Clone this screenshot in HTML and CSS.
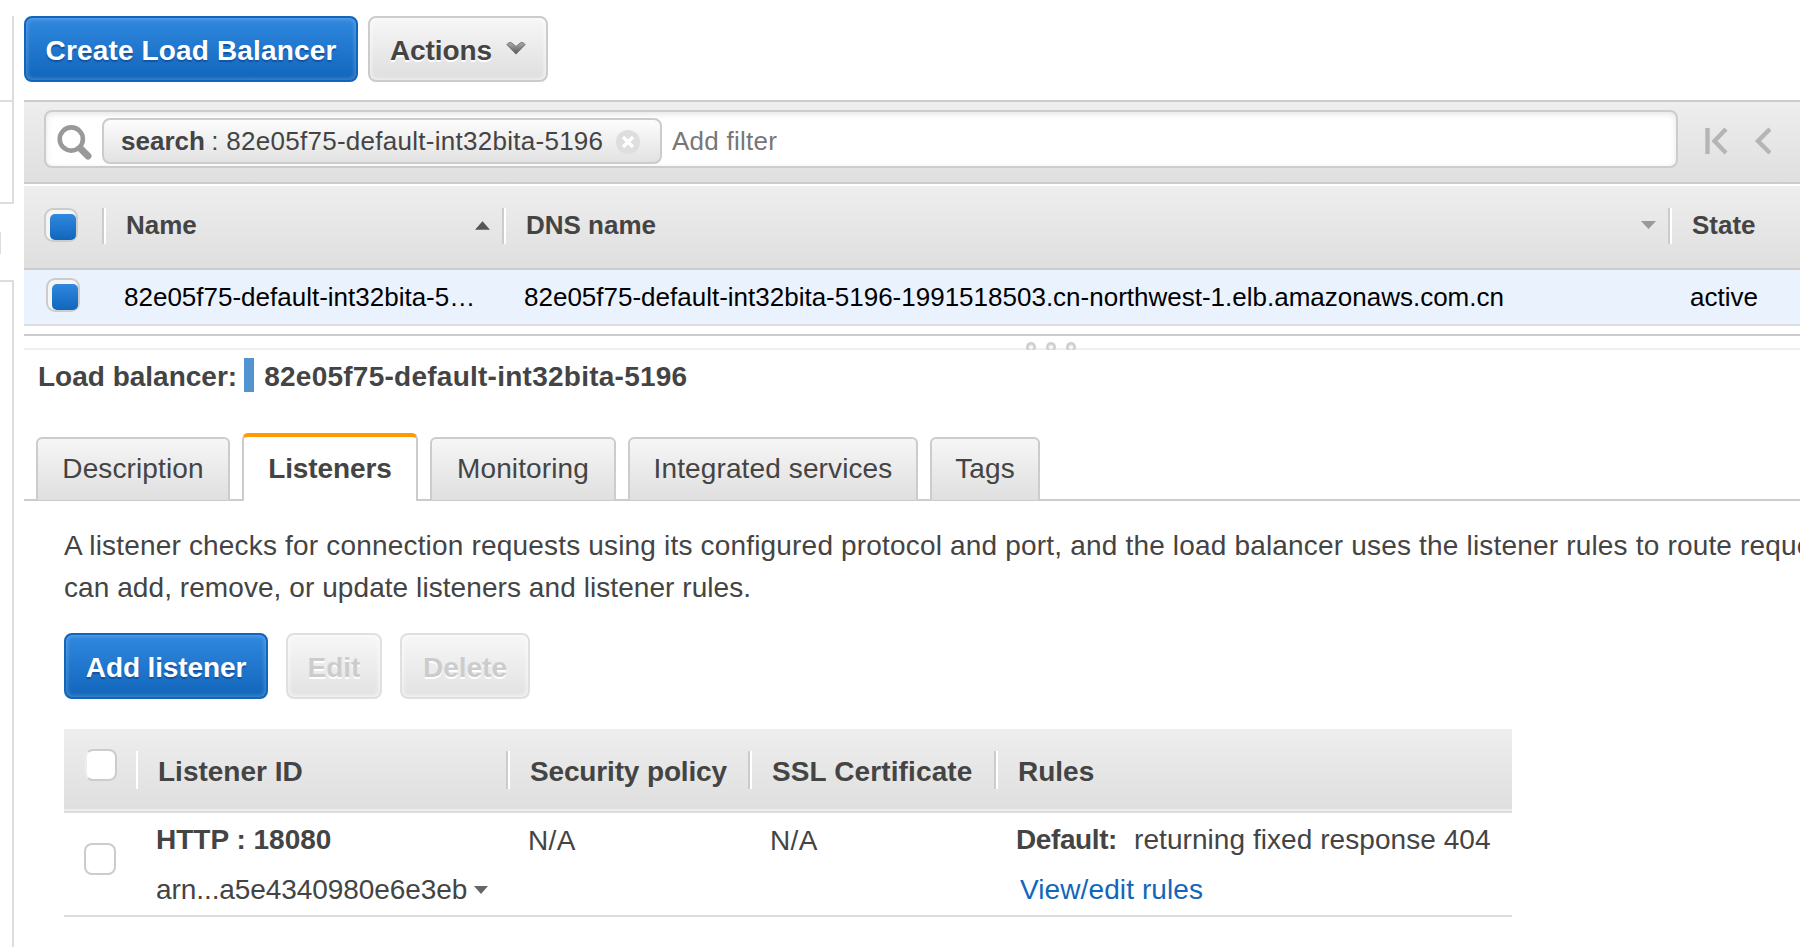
FILE: index.html
```html
<!DOCTYPE html>
<html lang="en">
<head>
<meta charset="utf-8">
<title>Load Balancers</title>
<link rel="stylesheet" href="styles.css">
</head>
<body>
<div class="app">
  <aside class="rail">
    <div class="rail-top"></div>
    <div class="rail-mid"></div>
    <div class="rail-gap"><span class="rail-handle"></span></div>
    <div class="rail-bottom"></div>
  </aside>
  <main class="main">
    <div class="toolbar">
      <button class="btn primary create">Create Load Balancer</button>
      <button class="btn actions">Actions
        <svg class="chev" width="20" height="13" viewBox="0 0 20 13"><defs><linearGradient id="cg" x1="0" y1="0" x2="0" y2="1"><stop offset="0" stop-color="#aaa"/><stop offset="1" stop-color="#555"/></linearGradient></defs><path d="M.8 2.500 L3 .7 H5.500 L10 4.500 L14.500 .7 H17 L19.200 2.500 L10 12.200Z" fill="url(#cg)" stroke="#777" stroke-width="1"/></svg>
      </button>
    </div>
    <div class="filterbar">
      <div class="search">
        <svg class="mag" width="36" height="36" viewBox="0 0 36 36"><circle cx="14.300" cy="14" r="11.600" fill="none" stroke="#999" stroke-width="4.600"/><path d="M24 24 L31 31" stroke="#999" stroke-width="7" stroke-linecap="round"/></svg>
        <div class="tag"><b>search</b><span class="tagval"> : 82e05f75-default-int32bita-5196</span>
          <svg width="24" height="24" viewBox="0 0 24 24"><circle cx="12" cy="12" r="12" fill="#dedede"/><path d="M7 7 L17 17 M17 7 L7 17" stroke="#fff" stroke-width="3.200"/></svg>
        </div>
        <span class="add">Add filter</span>
      </div>
      <svg class="pager" width="66" height="28" viewBox="0 0 66 28"><g fill="none" stroke="#b5b5b5" stroke-width="4.400"><path d="M2.500 1 V27"/><path d="M21 2 L9.500 14 L21 26"/><path d="M65 2 L53 14 L65 26"/></g></svg>
    </div>
    <div class="grid head">
      <div class="pick"><span class="check on"></span></div>
      <div class="cell"><span>Name</span><svg width="15" height="9" viewBox="0 0 16 9"><path d="M0 9 L8 0 L16 9Z" fill="#555"/></svg></div>
      <div class="cell"><span>DNS name</span><svg width="15" height="8" viewBox="0 0 15 8"><path d="M0 0 L7.500 8 L15 0Z" fill="#999"/></svg></div>
      <div class="cell"><span>State</span></div>
    </div>
    <div class="grid row">
      <div class="pick"><span class="check on"></span></div>
      <div class="val">82e05f75-default-int32bita-5…</div>
      <div class="val">82e05f75-default-int32bita-5196-1991518503.cn-northwest-1.elb.amazonaws.com.cn</div>
      <div class="val">active</div>
    </div>
    <div class="splitter"><i></i><i></i><i></i></div>
    <h2 class="title"><span>Load balancer:</span><em></em><span class="lbname">82e05f75-default-int32bita-5196</span></h2>
    <nav class="tabs">
      <div class="tab t1">Description</div>
      <div class="tab t2 active">Listeners</div>
      <div class="tab t3">Monitoring</div>
      <div class="tab t4">Integrated services</div>
      <div class="tab t5">Tags</div>
    </nav>
    <section class="panel">
      <p class="intro"><span class="wide">A listener checks for connection requests using its configured protocol and port, and the load balancer uses the listener rules to route reque</span><br>can add, remove, or update listeners and listener rules.</p>
      <div class="buttons">
        <button class="btn primary add-l">Add listener</button>
        <button class="btn off edit">Edit</button>
        <button class="btn off del">Delete</button>
      </div>
      <div class="ltable">
        <div class="lgrid lhead">
          <div class="lpick"><span class="box"></span></div>
          <div class="lcell first">Listener ID</div>
          <div class="lcell policy">Security policy</div>
          <div class="lcell ssl">SSL Certificate</div>
          <div class="lcell">Rules</div>
        </div>
        <div class="lgrid lrow">
          <div class="lpick"><span class="box"></span></div>
          <div class="stack"><b>HTTP : 18080</b><span class="arn">arn...a5e4340980e6e3eb<svg width="14" height="8" viewBox="0 0 14 8"><path d="M0 0 L7 8 L14 0Z" fill="#666"/></svg></span></div>
          <div class="na">N/A</div>
          <div class="na">N/A</div>
          <div class="stack rules"><span class="rule"><b>Default:</b><span>returning fixed response 404</span></span><a class="link">View/edit rules</a></div>
        </div>
      </div>
    </section>
  </main>
</div>
</body>
</html>
```
FILE: styles.css
```css
* { box-sizing: border-box; }
body { margin: 0; background: #fff; overflow: hidden; font-family: "Liberation Sans", Arial, sans-serif; color: #444; }
.app { display: flex; gap: 10px; width: 1800px; height: 947px; overflow: hidden; }

/* left navigation edge */
.rail { width: 14px; flex: none; display: flex; flex-direction: column; padding-top: 16px; }
.rail-top { height: 84px; border-right: 2px solid #ddd; }
.rail-mid { height: 104px; border: solid #ddd; border-width: 2px 2px 2px 0; }
.rail-gap { height: 76px; padding-top: 28px; }
.rail-handle { display: block; width: 1px; height: 22px; background: #ddd; }
.rail-bottom { flex: 1; border: solid #ddd; border-width: 2px 2px 0 0; }
.main { flex: 1; min-width: 0; overflow: hidden; }

/* buttons */
.btn { height: 66px; margin: 0; padding: 3px 0 0; border: 2px solid #ccc; border-radius: 8px; font: bold 28px "Liberation Sans", Arial, sans-serif; letter-spacing: .1px; color: #444; text-align: center; white-space: nowrap; background: linear-gradient(#f7f7f7, #dedede); text-shadow: 0 2px 0 #fff; box-shadow: inset 0 0 4px 1px rgba(255,255,255,.7); }
.btn.primary { color: #fff; border-color: #16b; background: linear-gradient(#3088df, #1166bb); text-shadow: 0 2px 1px #1553a0; box-shadow: inset 0 0 4px 1px rgba(255,255,255,.25); }
.btn.off { color: #ccc; border-color: #e0e0e0; background: linear-gradient(#f7f7f7, #e2e2e2); letter-spacing: 0; }
.toolbar { display: flex; gap: 10px; height: 100px; padding-top: 16px; }
.create { width: 334px; letter-spacing: .15px; }
.actions { width: 180px; display: flex; justify-content: center; align-items: center; gap: 14px; letter-spacing: -.1px; }
.chev { margin-top: -5px; }
.add-l { width: 204px; letter-spacing: -.12px; }
.edit { width: 96px; }
.del { width: 130px; }

/* filter */
.filterbar { height: 84px; display: flex; align-items: flex-start; padding: 8px 0 0 20px; border: solid #ccc; border-width: 2px 0; background: linear-gradient(#eee, #dfdfdf); }
.search { width: 1634px; height: 58px; display: flex; align-items: center; padding-left: 11px; border: 2px solid #ccc; border-radius: 8px; background: #fff; box-shadow: inset 0 2px 6px #e4e4e4; font-size: 26px; }
.mag { margin: 8px 9px 0 0; }
.tag { width: 560px; height: 46px; margin-top: 4px; display: flex; align-items: center; padding-left: 17px; border: 2px solid #ccc; border-radius: 8px; background: linear-gradient(#fdfdfd, #e2e2e2); }
.tagval { white-space: pre; letter-spacing: .27px; margin-left: -1px; }
.tag svg { margin: 2px 0 0 13px; }
.add { margin: 4px 0 0 10px; color: #777; letter-spacing: .25px; }
.pager { margin: 17px 0 0 27px; }

/* load balancer grid */
.grid { display: grid; grid-template-columns: 78px 400px 1166px 1fr; }
.head { height: 86px; border: solid #fff; border-width: 2px 0 0; border-bottom: 2px solid #ccc; background: linear-gradient(#eee, #dfdfdf); font: bold 26px "Liberation Sans", Arial, sans-serif; }
.pick { padding: 22px 0 0 20px; }
.check { display: block; width: 34px; height: 34px; padding: 4px 0 0 4px; border: 2px solid #ccc; border-radius: 9px; background: #f5f5f5; }
.check::before { content: ""; display: block; width: 26px; height: 26px; border-radius: 5px; background: linear-gradient(#3088df, #16b); }
.cell { height: 36px; margin-top: 22px; padding: 0 12px 0 22px; display: flex; align-items: center; justify-content: space-between; border-left: 2px solid #ccc; box-shadow: inset 2px 0 #fff; }
.cell span { padding-bottom: 2px; }
.cell svg { margin-top: -2px; }
.row { height: 56px; border-bottom: 2px solid #ddd; background: #eaf2fe; font-size: 26px; line-height: 54px; color: #000; }
.row .pick { padding: 8px 0 0 22px; }
.val { padding-left: 22px; white-space: nowrap; }
.splitter { height: 16px; margin-top: 8px; display: flex; gap: 10px; justify-content: center; padding: 6px 0 0 278px; border-top: 2px solid #ccc; border-bottom: 2px solid #f0f0f0; }
.splitter i { width: 10px; height: 8px; border-radius: 5px 5px 2px 2px; background: radial-gradient(circle at 50% 65%, #f6f6f6 1.5px, #d0d0d0 3px); }

/* details */
.title { margin: 0; height: 82px; padding: 8px 0 0 14px; display: flex; font-size: 28px; line-height: 38px; white-space: nowrap; }
.title em { width: 10px; height: 34px; margin: 0 10px 0 7px; background: #5294cf; }
.lbname { letter-spacing: .25px; }
.tabs { height: 69px; display: flex; gap: 12px; align-items: flex-end; padding-left: 12px; box-shadow: inset 0 -2px #ccc; }
.tab { height: 64px; padding-top: 2px; border: 2px solid #ccc; border-bottom-width: 1px; border-radius: 6px 6px 0 0; background: linear-gradient(#f6f6f6, #dfdfdf); font-size: 28px; line-height: 56px; letter-spacing: .12px; text-align: center; white-space: nowrap; }
.tab.active { height: 68px; border-top: 4px solid #f90; border-bottom: 0; background: #fff; font-weight: bold; line-height: 60px; letter-spacing: -.1px; }
.t1 { width: 194px; }
.t2 { width: 176px; }
.t3 { width: 186px; }
.t4 { width: 290px; }
.t5 { width: 110px; }
.panel { padding: 24px 0 0 40px; }
.intro { margin: 0 0 24px; font-size: 28px; line-height: 42px; letter-spacing: .07px; white-space: nowrap; }
.wide { letter-spacing: .18px; }
.buttons { display: flex; gap: 18px; margin-bottom: 30px; }
.ltable { width: 1448px; font-size: 28px; }
.lgrid { display: grid; grid-template-columns: 72px 370px 242px 246px 1fr; }
.lhead { height: 84px; border-bottom: 2px solid #ddd; background: linear-gradient(#eee, #dfdfdf 80px, #eee 80px); font-weight: bold; }
.lpick { padding: 20px 0 0 21px; }
.box { display: block; width: 32px; height: 32px; border: 2px solid #ccc; border-radius: 8px; background: #fff; }
.lhead .box { border-left-color: #eee; }
.lcell { height: 38px; margin-top: 22px; padding: 3px 0 0 22px; border-left: 2px solid #ccc; box-shadow: inset 2px 0 #fff; line-height: 36px; white-space: nowrap; }
.lcell.first { border-left: 0; padding-left: 22px; }
.policy { letter-spacing: -.15px; }
.ssl { letter-spacing: .12px; }
.lrow { height: 104px; border-bottom: 2px solid #ddd; }
.lrow .lpick { padding: 30px 0 0 20px; }
.stack { display: flex; flex-direction: column; padding: 9px 0 0 20px; gap: 14px; line-height: 36px; white-space: nowrap; }
.stack.rules { padding-left: 22px; }
.arn { display: flex; align-items: center; gap: 7px; letter-spacing: -.08px; }
.na { padding: 10px 0 0 22px; line-height: 36px; letter-spacing: .4px; }
.rule { display: flex; gap: 17px; letter-spacing: .06px; }
.rule b { letter-spacing: -.4px; }
.link { padding-left: 4px; color: #16b; letter-spacing: .1px; }
```
